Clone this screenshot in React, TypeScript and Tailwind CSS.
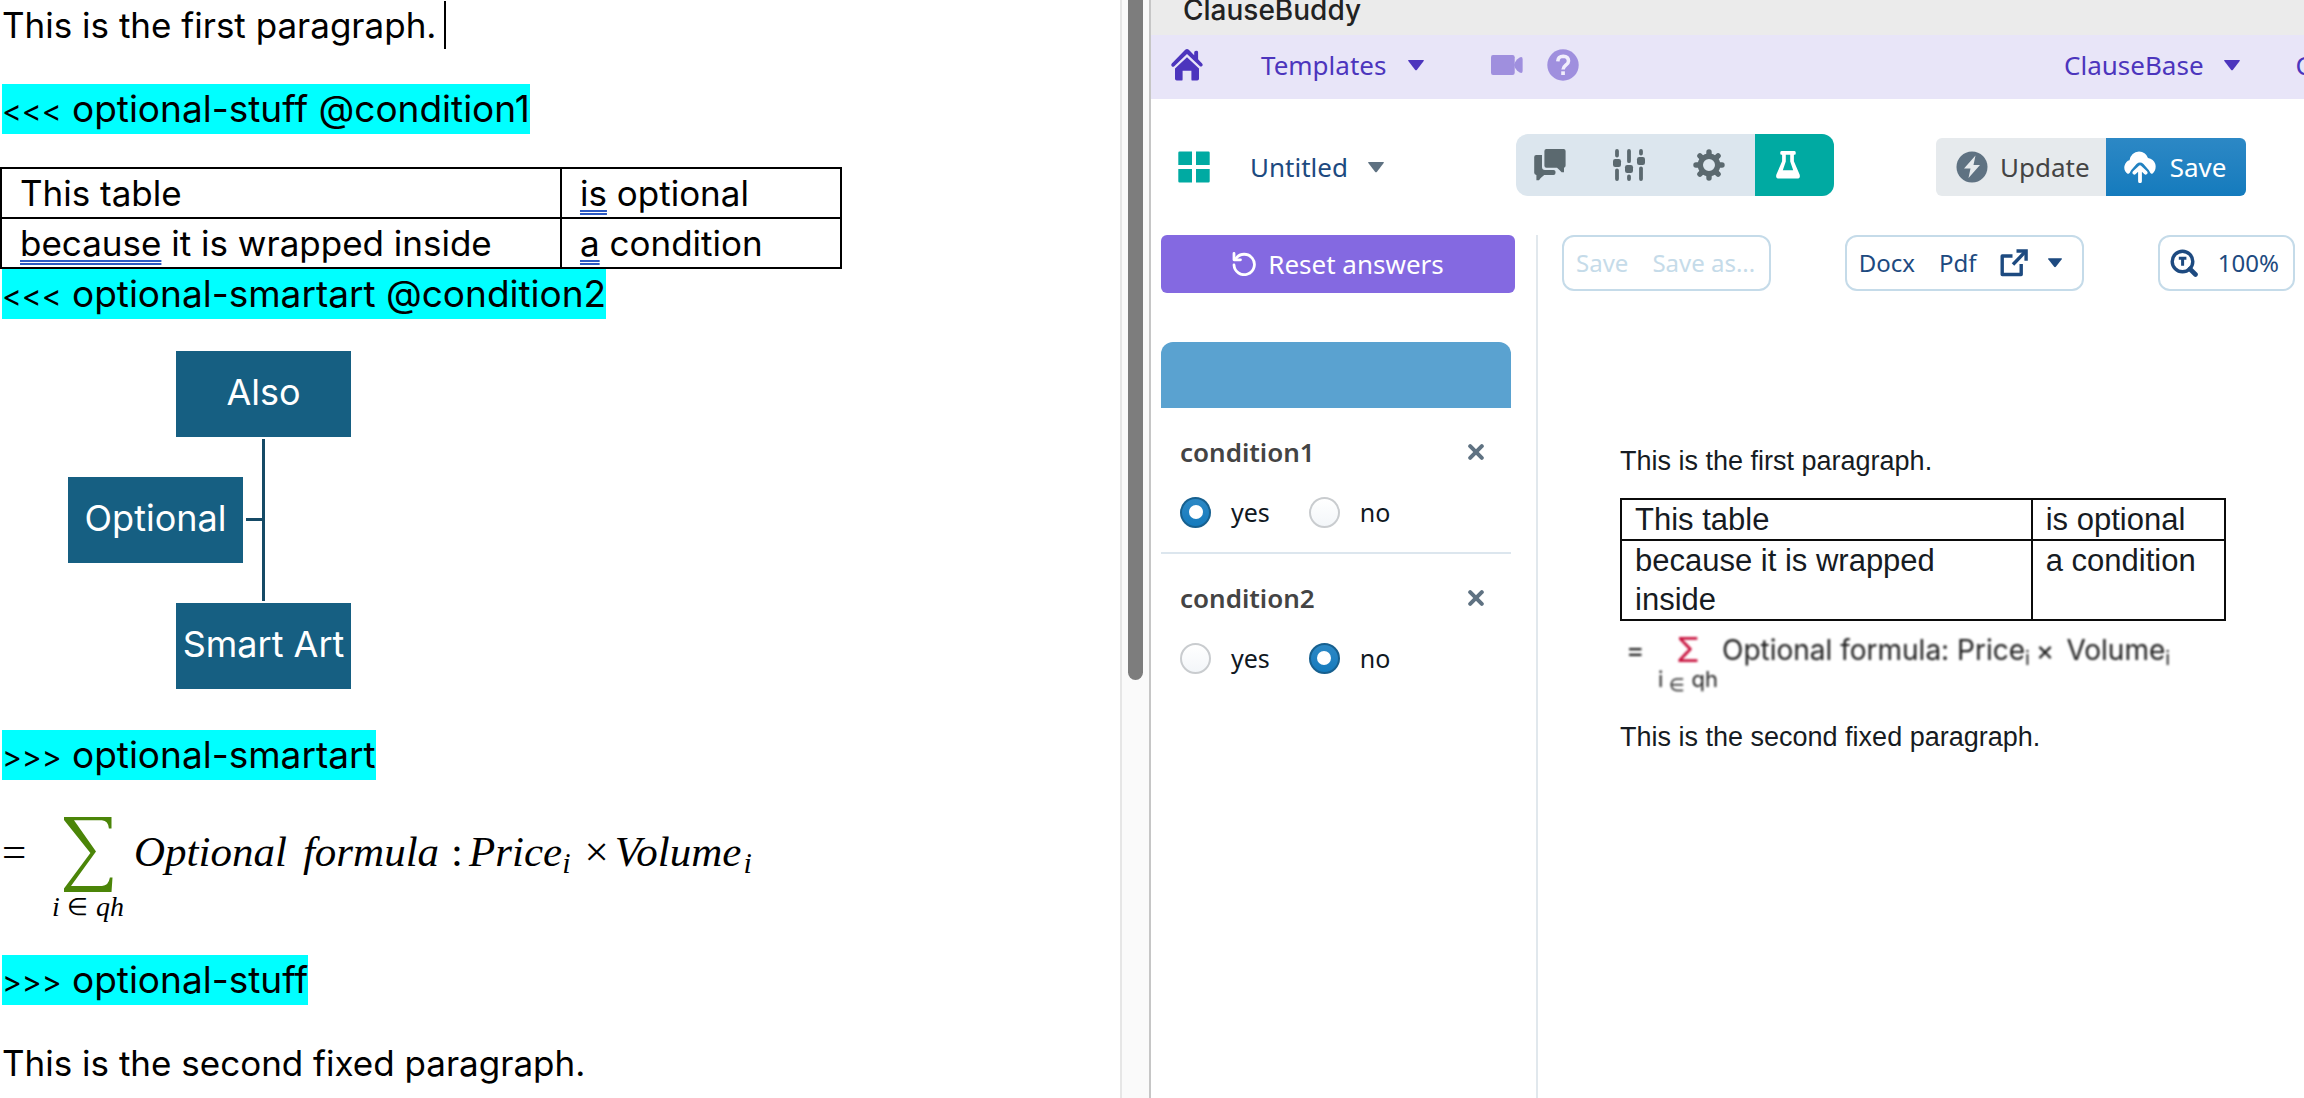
import type { ReactNode } from 'react';

const ui = 'font-[Noto_Sans,sans-serif]';

function Caret({ className }: { className: string }) {
  return (
    <svg viewBox="0 0 16 11" className={className} fill="currentColor" aria-hidden="true">
      <path d="M.6 0h14.8q.8.4.3 1.1L9 9.8q-1 1-2 0L.3 1.1Q-.2.4.6 0Z" />
    </svg>
  );
}

function HomeIcon() {
  return (
    <svg viewBox="0 0 32 32" className="size-8" fill="#4c35bd" aria-hidden="true">
      <path d="M16 0q1 0 1.8.8l5.4 5.4V3.4q0-1.4 1.9-1.6t2 1.4v7l4 4.2q1.2 1.5 0 2.6t-2.4 0L16 4.900 3.300 17.200q-1.400 1.100-2.500 0t0-2.600L14.200.800Q15 0 16 0Z" />
      <path d="M16 8.200 28 19.400v10.400q0 1.800-1.800 1.800h-4.600q-1.200 0-1.200-1.200v-8.600h-8.800v8.600q0 1.200-1.200 1.200H5.800Q4 31.600 4 29.800V19.400Z" />
    </svg>
  );
}

function VideoIcon() {
  return (
    <svg viewBox="0 0 32 20" className="h-5 w-8" fill="#9f8fde" aria-hidden="true">
      <path d="M2 0h19.500q2.200 0 2.200 2.200v15.600q0 2.200-2.200 2.200H2Q0 20 0 17.800V2.200Q0 0 2 0Z" />
      <path d="M23 10q.4-2.400 3-5.400l2.600-2.200Q31.600 1 31.600 4v12q0 3-3 1.600L26 15.400q-2.600-3-3-5.400Z" />
    </svg>
  );
}

function HelpIcon() {
  return (
    <svg viewBox="0 0 32 32" className="size-8" aria-hidden="true">
      <circle cx="16" cy="16" r="15.700" fill="#9f8fde" />
      <path d="M10.800 12.300q.3-5 5.400-5 5.200.2 5.300 4.600 0 2.200-2.700 4.300-2.600 2-2.700 4.300" fill="none" stroke="#f1eefc" strokeWidth="3.600" />
      <path d="M14.200 22.300h3.700v3.700h-3.700z" fill="#f1eefc" />
    </svg>
  );
}

function GridIcon() {
  return (
    <svg viewBox="0 0 32 32" className="size-8" fill="#00aaa2" aria-hidden="true">
      <path d="M1.500.500H14v13.500H.3V1.700Q.3.500 1.500.500ZM18 .500h12.500q1.200 0 1.200 1.200V14H18ZM.3 18H14v13.500H1.500Q.3 31.500.3 30.300ZM18 18h13.700v12.300q0 1.200-1.200 1.200H18Z" />
    </svg>
  );
}

function ChatIcon() {
  return (
    <svg viewBox="0 0 32 32" className="size-8" fill="#5b696f" aria-hidden="true">
      <path d="M12.400 0h17.200q2 0 2 2v14.500q0 2-1.600 2.200v4.600h-2.400q-2-2.400-4.600-4.600H12.400q-2 0-2-2V2q0-2 2-2Z" />
      <path d="M2.200 6H8v11.900q0 3 3 3h8.500q2 0 2 1.900v1.200q0 1.900-2 1.900h-9.300q-3.200 2.400-5.200 5.300H2.400v-5.300Q.2 25.600.2 23.800V8q0-2 2-2Z" />
    </svg>
  );
}

function SlidersIcon() {
  return (
    <svg viewBox="0 0 32 32" className="size-8" fill="none" stroke="#5b696f" strokeWidth="3.800" strokeLinecap="round" aria-hidden="true">
      <path d="M4 2v4.500M4 21.300V30M16 2v10.200M16 27.500V30M28 2v2.500M28 19.300V30" />
      <g fill="#5b696f" stroke="none">
        <rect x="0" y="10" width="8" height="8" rx="2.200" />
        <rect x="12" y="16" width="8" height="8" rx="2.200" />
        <rect x="24" y="8" width="8" height="8" rx="2.200" />
      </g>
    </svg>
  );
}

function GearIcon() {
  return (
    <svg viewBox="0 0 32 32" className="size-8" fill="none" stroke="#5b696f" aria-hidden="true">
      <circle cx="16" cy="16" r="8.700" strokeWidth="5.400" />
      <g strokeWidth="5.400" strokeLinecap="round">
        <path d="M16 3v3M16 26v3M3 16h3M26 16h3" />
        <path d="m6.900 6.900 2 2M23.100 23.100l2 2M6.900 25.100l2-2M23.100 8.900l2-2" />
      </g>
    </svg>
  );
}

function FlaskIcon() {
  return (
    <svg viewBox="0 0 32 32" className="size-8" fill="#fff" aria-hidden="true">
      <path fillRule="evenodd" d="M9.500 2h13q1.300 0 1.300 1.900t-1.300 1.900h-.6v6.500l5.700 13.200q1.200 4.100-2.500 4.100H7q-3.800 0-2.600-4.100l5.700-13.200V5.800h-.6q-1.300 0-1.300-1.900T9.500 2Zm4.300 3.800v6.800l-3 8.600h10.400l-3-8.600V5.800Z" />
    </svg>
  );
}

function BoltIcon() {
  return (
    <svg viewBox="0 0 32 32" className="size-8" aria-hidden="true">
      <circle cx="16" cy="16" r="15.500" fill="#5f7282" />
      <path d="M19.500 4.500 8 17.500h6.500L12.500 27 24 14h-6.500Z" fill="#e6eaed" />
    </svg>
  );
}

function CloudIcon() {
  return (
    <svg viewBox="0 0 32 32" className="size-8" aria-hidden="true">
      <path d="M4 23Q-.8 19.500.6 14.500 2 10 5.500 9.300 7.200 1 15 .500q6.500 0 9 6.500 5.600.9 7.300 6 1.500 6-3.300 10-2-.6-3.100-3.700L19.500 13q-3.500-2.800-7 0l-5.400 6.300Q6 22.400 4 23Z" fill="#fff" />
      <path d="M16 30.200V17M10.400 21.700l5.600-5.400 5.600 5.400" fill="none" stroke="#fff" strokeWidth="3.800" strokeLinecap="round" strokeLinejoin="round" />
    </svg>
  );
}

function ResetIcon() {
  return (
    <svg viewBox="0 0 24 24" className="size-6" fill="none" stroke="#fff" aria-hidden="true">
      <path d="M3.900 6.500A10.200 10.200 0 1 1 2 13" strokeWidth="2.800" strokeLinecap="round" />
      <path d="M2 1.500v6.300h6.500" strokeWidth="2.800" strokeLinecap="round" strokeLinejoin="round" />
    </svg>
  );
}

function ExternalIcon() {
  return (
    <svg viewBox="0 0 28 28" className="size-7" fill="none" stroke="currentColor" aria-hidden="true">
      <path d="M12.500 7H2.200v18.500h19V15" strokeWidth="3.400" strokeLinejoin="round" />
      <path d="M13 15.500 25 3" strokeWidth="3.400" />
      <path d="M16.500 2h9.600v9.800" strokeWidth="3.400" />
    </svg>
  );
}

function ZoomIcon() {
  return (
    <svg viewBox="0 0 28 28" className="size-7" fill="none" stroke="currentColor" strokeLinecap="round" aria-hidden="true">
      <circle cx="12.500" cy="12.500" r="10.300" strokeWidth="3.400" />
      <path d="m20 20 5.500 5.500" strokeWidth="4.600" />
      <path d="M8.800 9.200h7.600M12.600 9.200v7.600" strokeWidth="3" strokeLinecap="butt" />
    </svg>
  );
}

function CloseIcon() {
  return (
    <svg viewBox="0 0 16 16" className="size-4" fill="none" stroke="#5f7282" strokeWidth="4" strokeLinecap="round" aria-hidden="true">
      <path d="m2.200 2.200 11.600 11.600M13.800 2.200 2.200 13.800" />
    </svg>
  );
}

function Tag({ marker, children }: { marker: string; children: ReactNode }) {
  return (
    <p className="h-[50px] w-fit bg-[#00ffff] text-[37px]">
      <span className="text-[30px]">{marker}</span> {children}
    </p>
  );
}

function Flagged({ children }: { children: ReactNode }) {
  return (
    <span className="underline decoration-[#2b59c3] decoration-double decoration-2 underline-offset-4">{children}</span>
  );
}

function Editor() {
  const node = 'absolute flex h-[86px] w-[175px] items-center justify-center bg-[#165f82] pb-1 text-[36px] text-white';
  return (
    <article className="overflow-hidden bg-white pl-0.5 font-[Inter,sans-serif] text-[35px] leading-[50px] text-black">
      <p className="flex items-center">
        This is the first paragraph.
        <span className="ml-2 h-12 w-0.5 bg-black" />
      </p>
      <div className="mt-[34px]">
        <Tag marker="<<<">optional-stuff @condition1</Tag>
      </div>
      <table className="-ml-0.5 mt-[33px] w-[842px] table-fixed border-collapse border-2 border-black leading-[48px]">
        <tbody>
          <tr>
            <td className="w-2/3 border-2 border-black pl-[18px]">This table</td>
            <td className="border-2 border-black pl-[18px]"><Flagged>is</Flagged> optional</td>
          </tr>
          <tr>
            <td className="border-2 border-black pl-[18px]"><Flagged>because</Flagged> it is wrapped inside</td>
            <td className="border-2 border-black pl-[18px]"><Flagged>a</Flagged> condition</td>
          </tr>
        </tbody>
      </table>
      <Tag marker="<<<">optional-smartart @condition2</Tag>
      <div className="relative mt-8 h-[338px]">
        <div className={`${node} left-[174px] top-0`}>Also</div>
        <div className={`${node} left-[66px] top-[126px]`}>Optional</div>
        <div className={`${node} left-[174px] top-[252px]`}>Smart Art</div>
        <div className="absolute left-[260px] top-[88px] h-[162px] w-[3px] bg-[#154a66]" />
        <div className="absolute left-[244px] top-[167px] h-[3px] w-4 bg-[#154a66]" />
      </div>
      <div className="mt-[41px]">
        <Tag marker=">>>">optional-smartart</Tag>
      </div>
      <div className="mt-[37px] flex font-[Liberation_Serif,serif] text-[43px] italic">
        <span className="mt-2.5 w-[50px] not-italic">=</span>
        <span className="flex w-[72px] flex-col items-center text-[28px] leading-[30px]">
          <svg viewBox="0 0 50 75" className="h-[75px] w-[50px]" fill="#4b8508" aria-label="sum">
            <path d="M1 0h47.500v11.500h-2.600q-.6-8-7-8.300H11L33 34.500 8 69h31q6.500-.3 7.900-8.500h2.600L48.500 75H1v-3.600L27.400 36 1 3Z" />
          </svg>
          <span className="flex w-full justify-between"><span>i</span><span className="text-[24px] not-italic">∈</span><span>qh</span></span>
        </span>
        <span className="mt-2.5 whitespace-pre pl-2.5">
          Optional<span className="pl-4">formula</span><span className="pl-3 not-italic">:</span>
        </span>
        <span className="mt-2.5 pl-1.5">Price<sub className="bottom-[-7px] text-[30px]">i</sub></span>
        <span className="mt-2.5 pl-3.5 not-italic">×</span>
        <span className="mt-2.5 pl-1.5">Volume<sub className="bottom-[-7px] pl-0.5 text-[30px]">i</sub></span>
      </div>
      <div className="mt-[33px]">
        <Tag marker=">>>">optional-stuff</Tag>
      </div>
      <p className="mt-[33px]">This is the second fixed paragraph.</p>
    </article>
  );
}

function Question({ name, value }: { name: string; value: string }) {
  return (
    <fieldset className="pl-[19px]">
      <div className="flex items-center justify-between pr-[27px]">
        <h2 className="text-[26px] font-semibold leading-9 text-[#444]">{name}</h2>
        <button aria-label={`Remove ${name}`}><CloseIcon /></button>
      </div>
      <div className="mt-6 flex gap-[39px] text-[25px] leading-9 text-[#10181f]">
        {['yes', 'no'].map((option) => (
          <label key={option} className="flex items-center gap-5">
            <input
              type="radio"
              name={name}
              defaultChecked={option === value}
              className="grid size-[31px] appearance-none place-content-center rounded-full border-2 border-[#c9cccf] bg-linear-to-b from-white to-[#f3f6f9] checked:border-[#17608f] checked:from-[#2c88c5] checked:to-[#147bbd] checked:before:size-3.5 checked:before:rounded-full checked:before:bg-white checked:before:content-['']"
            />
            {option}
          </label>
        ))}
      </div>
    </fieldset>
  );
}

function Preview() {
  const cell = 'border-2 border-[#0b0b0b] pl-[13px] align-top';
  return (
    <article className="mt-[150px] pl-[82px] pr-[78px] font-[Liberation_Sans,Arial,sans-serif] text-[27px] leading-10 text-[#161b22]">
      <p>This is the first paragraph.</p>
      <table className="mt-[17px] w-full table-fixed border-collapse text-[31px] leading-[39px]">
        <tbody>
          <tr>
            <td className={`${cell} w-[68%] pr-4`}>This table</td>
            <td className={cell}>is optional</td>
          </tr>
          <tr>
            <td className={`${cell} pr-4`}>because it is wrapped inside</td>
            <td className={cell}>a condition</td>
          </tr>
        </tbody>
      </table>
      <div className="mt-3 flex h-[66px] whitespace-nowrap pl-1.5 font-[Inter,sans-serif] text-[28px] leading-[34px] text-[#1c1c1c] blur-[1px]">
        <span className="w-8">=</span>
        <span className="flex w-[60px] flex-col items-center">
          <span className="text-[34px] text-[#c8103c]">Σ</span>
          <span className="flex gap-1.5 text-[22px] leading-6">i <span className="pt-1.5 text-[18px]">∈</span> qh</span>
        </span>
        <span className="pl-1">Optional formula: Price<sub className="text-[20px]">i</sub></span>
        <span className="pl-1.5">×</span>
        <span className="pl-3">Volume<sub className="text-[20px]">i</sub></span>
      </div>
      <p className="mt-[18px]">This is the second fixed paragraph.</p>
    </article>
  );
}

export default function App() {
  const segment = 'flex h-full flex-1 items-center justify-center pr-3';
  const box = 'flex h-14 items-center rounded-xl border-2 border-[#c5dbe9] text-[24px]';
  return (
    <div className="grid h-screen grid-cols-[35fr_37fr] overflow-hidden bg-white">
      <Editor />
      <div className="flex min-w-0">
        <div className="w-[31px] shrink-0 border-l-2 border-r-2 border-l-[#e6e6e6] border-r-[#c6c6c6] bg-[#fafafa] pl-[6px]">
          <div className="h-[680px] w-[15px] rounded-b-full bg-[#7d7d7d]" />
        </div>
        <div className={`${ui} flex min-w-0 flex-1 flex-col text-[26px]`}>
          <header className="h-[35px] bg-[#ebebeb] pl-8 font-[Inter,sans-serif] text-[28px] font-medium leading-5 text-[#222]">
            ClauseBuddy
          </header>
          <nav className="flex h-16 items-center overflow-hidden bg-[#e8e5f8] pb-1 pl-5 text-[#4c35bd]">
            <a href="#home" aria-label="Home"><HomeIcon /></a>
            <button className="ml-[58px] flex items-center gap-[22px]">Templates<Caret className="h-[11px] w-4" /></button>
            <button className="ml-[67px]" aria-label="Video"><VideoIcon /></button>
            <button className="ml-6" aria-label="Help"><HelpIcon /></button>
            <div className="-mr-2 ml-auto flex items-center">
              <button className="flex items-center gap-5">ClauseBase<Caret className="h-[11px] w-4" /></button>
              <span className="ml-14">C</span>
            </div>
          </nav>
          <div className="flex items-center pl-[27px] pt-[35px]">
            <div className="flex w-[338px] items-center pt-1">
              <button aria-label="Blocks"><GridIcon /></button>
              <button className="ml-10 flex items-center gap-5 text-[#1d4a80]">
                Untitled<Caret className="h-[11px] w-4 text-[#5f7282]" />
              </button>
            </div>
            <div className="flex h-[62px] w-[318px] overflow-hidden rounded-xl bg-[#dce6ee]">
              <button className={segment} aria-label="Comments"><ChatIcon /></button>
              <button className={segment} aria-label="Options"><SlidersIcon /></button>
              <button className={segment} aria-label="Settings"><GearIcon /></button>
              <button className={`${segment} bg-[#00aaa2]`} aria-label="Test"><FlaskIcon /></button>
            </div>
            <div className="ml-[102px] mt-1 flex h-[58px] overflow-hidden rounded-md">
              <button className="flex items-center gap-3 bg-[#e6eaed] pl-5 pr-4 text-[#444]"><BoltIcon />Update</button>
              <button className="flex items-center gap-3.5 bg-linear-to-b from-[#2c88c5] to-[#147bbd] pl-[18px] pr-5 text-white"><CloudIcon />Save</button>
            </div>
          </div>
          <main className="mt-[39px] flex min-h-0 flex-1">
            <section className="w-[385px] shrink-0 pl-2.5 pr-[21px]">
              <button className="flex h-[58px] w-full items-center justify-center gap-3 rounded-md bg-[#8469e1] text-white">
                <ResetIcon />Reset answers
              </button>
              <div className="mr-1 mt-[49px]">
                <div className="h-[66px] rounded-t-xl bg-[#5aa2d0]" />
                <div className="pb-[22px] pt-[26px]"><Question name="condition1" value="yes" /></div>
                <div className="border-t-2 border-[#dce6ee] pt-[26px]"><Question name="condition2" value="no" /></div>
              </div>
            </section>
            <section className="min-w-0 flex-1 border-l-2 border-[#e1e8ed]">
              <div className="flex justify-between pl-6 pr-[9px] text-[#1d4a80]">
                <div className={`${box} gap-6 pl-3 pr-3.5 text-[#c5dbe9]`}>
                  <button disabled>Save</button>
                  <button disabled>Save as...</button>
                </div>
                <div className={`${box} gap-6 pl-3 pr-5`}>
                  <button>Docx</button>
                  <button>Pdf</button>
                  <button className="flex items-center gap-5" aria-label="Open in new window">
                    <ExternalIcon /><Caret className="h-2.5 w-3.5" />
                  </button>
                </div>
                <button className={`${box} gap-5 pl-2.5 pr-3.5`}><ZoomIcon />100%</button>
              </div>
              <Preview />
            </section>
          </main>
        </div>
      </div>
    </div>
  );
}
